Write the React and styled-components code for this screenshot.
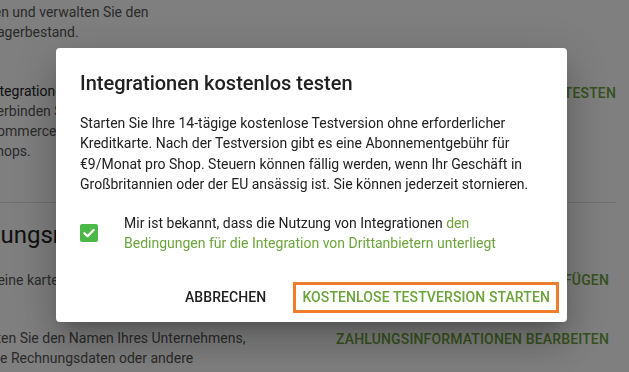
import React from 'react';
import styled, { createGlobalStyle } from 'styled-components';

const GlobalStyle = createGlobalStyle`
  html, body {
    margin: 0;
    padding: 0;
    background: #fff;
    overflow: hidden;
  }
  body {
    font-family: Roboto, "Noto Sans", Arial, sans-serif;
    color: #212121;
  }
`;

const GREEN = '#6ba43a';

const Page = styled.div`
  margin-left: -46px;
  width: 662px;
  height: 372px;
  font-size: 14px;
  line-height: 20px;
  color: #555;
`;

const Section = styled.section`
  padding-bottom: ${p => p.$bottom || 0}px;
  border-bottom: ${p => (p.$divider ? '1px solid #e0e0e0' : 'none')};
`;

const Row = styled.div`
  display: flex;
  justify-content: space-between;
  align-items: ${p => p.$align || 'flex-start'};
  padding-top: ${p => p.$top || 0}px;
`;

const ItemBody = styled.div`
  display: flex;
`;

const IconSlot = styled.div`
  width: 24px;
  height: 24px;
  margin-right: 10px;
  border-radius: 4px;
  background: #7ab84c;
`;

const Lines = styled.div`
  white-space: nowrap;
`;

const Line = styled.div``;

const ItemTitle = styled.div`
  color: #222;
`;

const Heading = styled.h2`
  margin: 0;
  padding-top: ${p => p.$top || 0}px;
  font-size: 24px;
  line-height: 32px;
  font-weight: 400;
  color: #222;
`;

const Action = styled.button`
  border: none;
  background: none;
  padding: 0;
  margin-top: ${p => p.$top || 0}px;
  margin-right: ${p => p.$right || 0}px;
  font-family: Roboto, Arial, sans-serif;
  font-size: 14px;
  font-weight: 500;
  line-height: 20px;
  letter-spacing: 0.15px;
  text-transform: uppercase;
  color: ${GREEN};
  white-space: nowrap;
`;

const Overlay = styled.div`
  position: fixed;
  inset: 0;
  background: rgba(0, 0, 0, 0.5);
  display: flex;
  align-items: center;
  justify-content: center;
  padding: 0 6px 2px 0;
`;

const Dialog = styled.div`
  width: 511px;
  background: #fff;
  border-radius: 4px;
  box-shadow: 0 11px 15px -7px rgba(0, 0, 0, 0.2), 0 24px 38px 3px rgba(0, 0, 0, 0.14),
    0 9px 46px 8px rgba(0, 0, 0, 0.12);
  display: flex;
  flex-direction: column;
`;

const Title = styled.h2`
  margin: 0;
  padding: 19px 24px 0;
  font-size: 20px;
  line-height: 32px;
  font-weight: 500;
  color: #212121;
`;

const Body = styled.p`
  margin: 14px 0 0;
  padding: 0 24px;
  font-size: 14px;
  line-height: 20.3px;
  color: #212121;
`;

const Consent = styled.label`
  display: flex;
  align-items: center;
  gap: 26px;
  margin-top: 18.5px;
  padding: 0 24px;
  font-size: 14px;
  line-height: 20.3px;
  color: #212121;
`;

const Box = styled.span`
  flex: none;
  width: 18px;
  height: 18px;
  border-radius: 2px;
  background: #4cb848;
  display: flex;
  align-items: center;
  justify-content: center;
`;

const Link = styled.span`
  color: ${GREEN};
`;

const Actions = styled.div`
  display: flex;
  justify-content: flex-end;
  gap: 18px;
  margin-top: 28.7px;
  padding: 0 8px 9px;
`;

const DialogButton = styled.button`
  box-sizing: border-box;
  height: 31px;
  padding: 0 6px;
  border: 3px solid ${p => (p.$focused ? '#ef7d2a' : 'transparent')};
  background: #fff;
  font-family: Roboto, Arial, sans-serif;
  font-size: 14px;
  font-weight: 500;
  letter-spacing: 0.1px;
  text-transform: uppercase;
  color: ${p => (p.$primary ? GREEN : '#212121')};
  white-space: nowrap;
`;

const CheckIcon = () => (
  <svg width="14" height="14" viewBox="0 0 14 14">
    <path d="M2.4 7.2 L5.5 10.3 L11.6 4" fill="none" stroke="#fff" strokeWidth="2.3" strokeLinecap="round" strokeLinejoin="round" />
  </svg>
);

export default function App() {
  return (
    <>
      <GlobalStyle />
      <Page>
        <Section $divider $bottom={40.8}>
          <Row $top={2.2}>
            <Lines>
              <Line>Erfassen und verwalten Sie den</Line>
              <Line>Warenlagerbestand.</Line>
            </Lines>
          </Row>
          <Row $top={39}>
            <ItemBody>
              <IconSlot />
              <Lines>
                <ItemTitle>Integrationen</ItemTitle>
                <Line>Verbinden Sie Ihre Plattformen für E-</Line>
                <Line>Commerce, wie Shopify und andere Online-</Line>
                <Line>Shops.</Line>
              </Lines>
            </ItemBody>
            <Action $top={2}>Integrationen kostenlos testen</Action>
          </Row>
        </Section>
        <Section>
          <Heading $top={15.8}>Zahlungsmethode</Heading>
          <Row $top={19.4} $align="center">
            <Lines>
              <Line>Noch keine karte hinterlegt.</Line>
            </Lines>
            <Action $right={7}>Zahlungsmethode hinzufügen</Action>
          </Row>
          <Row $top={38}>
            <Lines>
              <Line>Verwalten Sie den Namen Ihres Unternehmens,</Line>
              <Line>sonstige Rechnungsdaten oder andere</Line>
              <Line>Angaben, die auf Ihren Rechnungen erscheinen.</Line>
            </Lines>
            <Action $right={7} $top={1}>Zahlungsinformationen bearbeiten</Action>
          </Row>
        </Section>
      </Page>
      <Overlay>
        <Dialog>
          <Title>Integrationen kostenlos testen</Title>
          <Body>
            Starten Sie Ihre 14-tägige kostenlose Testversion ohne erforderlicher Kreditkarte. Nach der
            Testversion gibt es eine Abonnementgebühr für €9/Monat pro Shop. Steuern können fällig
            werden, wenn Ihr Geschäft in Großbritannien oder der EU ansässig ist. Sie können jederzeit
            stornieren.
          </Body>
          <Consent>
            <Box>
              <CheckIcon />
            </Box>
            <span>
              Mir ist bekannt, dass die Nutzung von Integrationen{' '}
              <Link>den Bedingungen für die Integration von Drittanbietern unterliegt</Link>
            </span>
          </Consent>
          <Actions>
            <DialogButton>Abbrechen</DialogButton>
            <DialogButton $primary $focused>
              Kostenlose Testversion starten
            </DialogButton>
          </Actions>
        </Dialog>
      </Overlay>
    </>
  );
}
